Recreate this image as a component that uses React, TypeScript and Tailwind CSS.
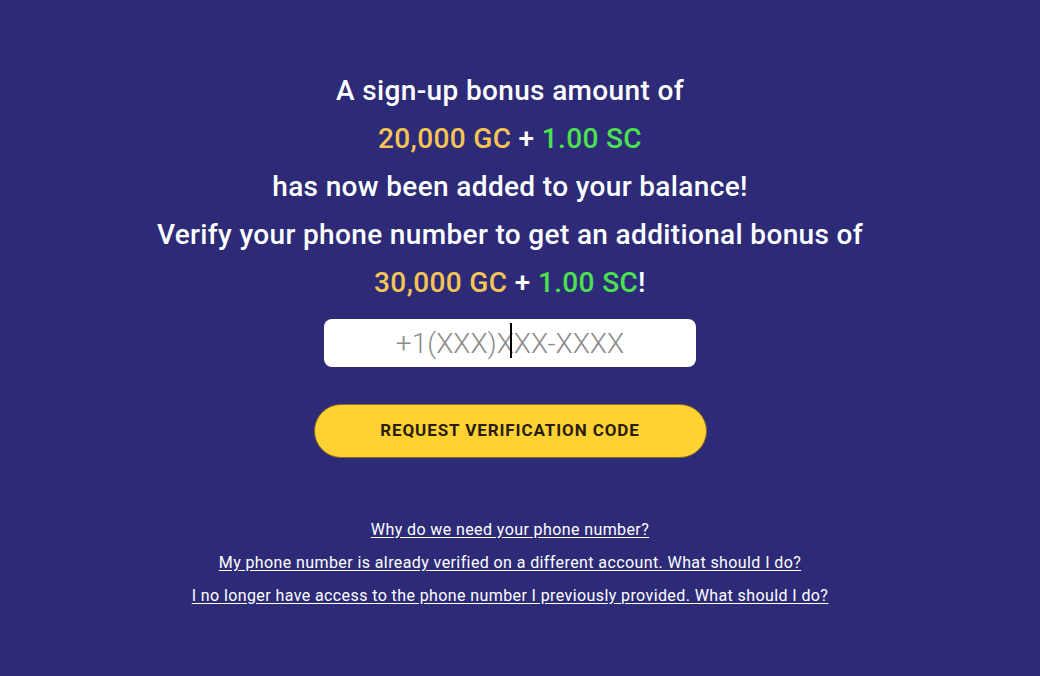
const font = { fontFamily: "Roboto, 'Liberation Sans', sans-serif" };

const links = [
  "Why do we need your phone number?",
  "My phone number is already verified on a different account. What should I do?",
  "I no longer have access to the phone number I previously provided. What should I do?",
];

const App = () => {
  return (
    <div
      className="min-h-[676px] w-full bg-[#2d2b78] text-white flex flex-col items-center pt-[67px] pr-[20px]"
      style={font}
    >
      <div className="flex flex-col items-center text-[28px] leading-[48px] tracking-[0.35px] font-medium text-center">
        <p>A sign-up bonus amount of</p>
        <p>
          <span className="text-[#f6c455]">20,000 GC</span> +{" "}
          <span className="text-[#4be150]">1.00 SC</span>
        </p>
        <p>has now been added to your balance!</p>
        <p>Verify your phone number to get an additional bonus of</p>
        <p>
          <span className="text-[#f6c455]">30,000 GC</span> +{" "}
          <span className="text-[#4be150]">1.00 SC</span>!
        </p>
      </div>

      <div className="relative mt-[12px]">
        <input
          type="tel"
          placeholder="+1(XXX)XXX-XXXX"
          className="block w-[372px] h-[48px] rounded-lg bg-white text-center text-[28px] font-light text-gray-700 placeholder:text-[#8c8c8c] outline-none"
          style={font}
        />
        <span className="absolute left-[186px] top-[4px] w-[1.5px] h-[35px] bg-black pointer-events-none" />
      </div>

      <button className="mt-[37px] w-[393px] h-[54px] rounded-full bg-[#fed232] border border-[#8a6d1c] text-[#2a1d10] font-bold text-[17px] tracking-[0.9px]">
        REQUEST VERIFICATION CODE
      </button>

      <div className="mt-[61px] flex flex-col items-center gap-[12px] text-[16px] leading-[21px] tracking-[0.4px]">
        {links.map((l) => (
          <a key={l} href="#" className="underline underline-offset-2 text-white">
            {l}
          </a>
        ))}
      </div>
    </div>
  );
};

export default App;
